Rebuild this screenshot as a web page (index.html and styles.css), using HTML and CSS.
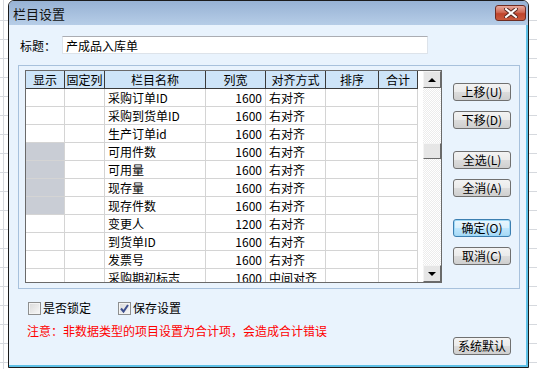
FILE: index.html
```html
<!doctype html>
<html lang="zh">
<head>
  <meta charset="utf-8">
  <title>栏目设置</title>
  <link rel="stylesheet" href="styles.css">
</head>
<body>
  <div class="window">
    <!-- title bar -->
    <div class="titlebar">
      <span class="title">栏目设置</span>
      <span class="close">
        <svg width="14" height="10" viewBox="0 0 14 10">
          <path d="M2 1 L12 9 M12 1 L2 9" stroke="#5a2a22" stroke-width="4" stroke-linecap="square"/>
          <path d="M2 1 L12 9 M12 1 L2 9" stroke="#fff" stroke-width="2" stroke-linecap="square"/>
        </svg>
      </span>
    </div>

    <div class="content">
      <div class="field">
        <span class="field-label">标题：</span>
        <input class="field-input" type="text" value="产成品入库单">
      </div>

      <div class="group">
        <div class="grid">
          <div class="grid-body">
            <div class="row head">
              <div class="cell">显示</div>
              <div class="cell">固定列</div>
              <div class="cell">栏目名称</div>
              <div class="cell">列宽</div>
              <div class="cell">对齐方式</div>
              <div class="cell">排序</div>
              <div class="cell">合计</div>
            </div>
            <div class="row">
              <div class="cell"></div><div class="cell"></div>
              <div class="cell name">采购订单ID</div><div class="cell num">1600</div>
              <div class="cell">右对齐</div><div class="cell"></div><div class="cell"></div>
            </div>
            <div class="row">
              <div class="cell"></div><div class="cell"></div>
              <div class="cell name">采购到货单ID</div><div class="cell num">1600</div>
              <div class="cell">右对齐</div><div class="cell"></div><div class="cell"></div>
            </div>
            <div class="row">
              <div class="cell"></div><div class="cell"></div>
              <div class="cell name">生产订单id</div><div class="cell num">1600</div>
              <div class="cell">右对齐</div><div class="cell"></div><div class="cell"></div>
            </div>
            <div class="row">
              <div class="cell off"></div><div class="cell"></div>
              <div class="cell name">可用件数</div><div class="cell num">1600</div>
              <div class="cell">右对齐</div><div class="cell"></div><div class="cell"></div>
            </div>
            <div class="row">
              <div class="cell off"></div><div class="cell"></div>
              <div class="cell name">可用量</div><div class="cell num">1600</div>
              <div class="cell">右对齐</div><div class="cell"></div><div class="cell"></div>
            </div>
            <div class="row">
              <div class="cell off"></div><div class="cell"></div>
              <div class="cell name">现存量</div><div class="cell num">1600</div>
              <div class="cell">右对齐</div><div class="cell"></div><div class="cell"></div>
            </div>
            <div class="row">
              <div class="cell off"></div><div class="cell"></div>
              <div class="cell name">现存件数</div><div class="cell num">1600</div>
              <div class="cell">右对齐</div><div class="cell"></div><div class="cell"></div>
            </div>
            <div class="row">
              <div class="cell"></div><div class="cell"></div>
              <div class="cell name">变更人</div><div class="cell num">1200</div>
              <div class="cell">右对齐</div><div class="cell"></div><div class="cell"></div>
            </div>
            <div class="row">
              <div class="cell"></div><div class="cell"></div>
              <div class="cell name">到货单ID</div><div class="cell num">1600</div>
              <div class="cell">右对齐</div><div class="cell"></div><div class="cell"></div>
            </div>
            <div class="row">
              <div class="cell"></div><div class="cell"></div>
              <div class="cell name">发票号</div><div class="cell num">1600</div>
              <div class="cell">右对齐</div><div class="cell"></div><div class="cell"></div>
            </div>
            <div class="row">
              <div class="cell"></div><div class="cell"></div>
              <div class="cell name">采购期初标志</div><div class="cell num">1600</div>
              <div class="cell">中间对齐</div><div class="cell"></div><div class="cell"></div>
            </div>
          </div>

          <!-- vertical scrollbar -->
          <div class="scrollbar">
            <div class="sb-btn"><span class="arrow-up"></span></div>
            <div class="sb-thumb"></div>
            <div class="sb-btn sb-down"><span class="arrow-down"></span></div>
          </div>
        </div>

        <div class="buttons">
          <button class="btn">上移(U)</button>
          <button class="btn">下移(D)</button>
          <button class="btn gap">全选(L)</button>
          <button class="btn">全消(A)</button>
          <button class="btn gap default">确定(O)</button>
          <button class="btn">取消(C)</button>
        </div>
      </div>

      <div class="options">
        <span class="check"><span class="box"></span>是否锁定</span>
        <span class="check"><span class="box checked">
          <svg width="11" height="11" viewBox="0 0 11 11"><path d="M2 5.5 L4.5 8.5 L9 2" fill="none" stroke="#3d4f8e" stroke-width="2"/></svg>
        </span>保存设置</span>
      </div>

      <div class="note">注意：非数据类型的项目设置为合计项，会造成合计错误</div>

      <div class="footer">
        <button class="btn">系统默认</button>
      </div>
    </div>
  </div>
</body>
</html>
```

FILE: styles.css
```css
body {
  margin: 0;
  padding: 0;
  width: 537px;
  height: 369px;
  overflow: hidden;
  font: 12px "Noto Sans CJK SC", sans-serif;
  color: #000;
  background-color: #fff;
  background-image:
    repeating-linear-gradient(to bottom, transparent 0 18px, #d6d9de 18px 19px),
    linear-gradient(to right, #d6d9de 0 1px, transparent 1px);
  background-position: 0 2px, 3px 0;
}

.window {
  margin-left: 8px;
  width: 521px;
  height: 368px;
  box-sizing: border-box;
  border: 1px solid #1b1b1b;
  border-radius: 6px 6px 0 0;
  background: #e9f3fd;
  box-shadow: inset -2px -2px 0 #5ec0e6;
  display: flex;
  flex-direction: column;
}

/* title bar */
.titlebar {
  height: 24px;
  display: flex;
  align-items: center;
  padding-left: 4px;
  border-radius: 5px 5px 0 0;
  background: linear-gradient(#97b2d4, #b6cde7);
}
.title {
  font-size: 13px;
  color: #111;
}
.close {
  margin-left: auto;
  margin-right: 2px;
  width: 31px;
  height: 16px;
  box-sizing: border-box;
  border: 1px solid #6e2c22;
  border-radius: 3px;
  background: linear-gradient(#e6a99d, #d06a55 45%, #c0442b 55%, #c85a3e);
  display: flex;
  align-items: center;
  justify-content: center;
}

.content {
  padding: 11px 8px 0 9px;
  display: flex;
  flex-direction: column;
}

/* title field */
.field {
  display: flex;
  align-items: center;
  height: 18px;
}
.field-label {
  padding-left: 2px;
  width: 42px;
}
.field-input {
  width: 366px;
  height: 18px;
  box-sizing: border-box;
  margin: 0;
  padding: 0 3px;
  border: 1px solid #dde3ea;
  border-top-color: #abadb3;
  background: #fff;
  font: 12px "Noto Sans CJK SC", sans-serif;
  outline: none;
}

/* group box with grid + buttons */
.group {
  margin-top: 11px;
  height: 224px;
  box-sizing: border-box;
  border: 1px solid #a8c1dc;
  padding: 4px 0 0 6px;
  display: flex;
  align-items: flex-start;
}
.grid {
  width: 417px;
  height: 213px;
  box-sizing: border-box;
  border: 1px solid #6a6a6a;
  background: #fff;
  display: flex;
}
.grid-body {
  width: 397px;
  overflow: hidden;
}
.row {
  display: grid;
  grid-template-columns: 39px 40px 101px 60px 60px 53px 39px;
  height: 18px;
}
.cell {
  box-sizing: border-box;
  border-right: 1px solid #d4d4d4;
  border-bottom: 1px solid #d4d4d4;
  line-height: 17px;
  white-space: nowrap;
  overflow: hidden;
  padding-left: 3px;
}
.cell.name {
  padding-left: 3px;
}
.cell.num {
  text-align: right;
  padding-right: 3px;
}
.cell.off {
  background: #c9cdd5;
}
.head .cell {
  background: #cde4f8;
  border-right: 1px solid #3a3a3a;
  border-bottom: 1px solid #3a3a3a;
  text-align: center;
  padding-left: 0;
}

/* scrollbar */
.scrollbar {
  width: 18px;
  display: flex;
  flex-direction: column;
  background: repeating-conic-gradient(#ececec 0 25%, #fff 0 50%) 0 0 / 2px 2px;
}
.sb-btn, .sb-thumb {
  box-sizing: border-box;
  border: 1px solid;
  border-color: #f4f4f4 #6a6a6a #6a6a6a #f4f4f4;
  background: #e6e6e6;
}
.sb-btn {
  height: 17px;
  display: flex;
  align-items: center;
  justify-content: center;
}
.sb-thumb {
  margin-top: 55px;
  height: 16px;
}
.sb-down {
  margin-top: auto;
}
.arrow-up, .arrow-down {
  width: 0;
  height: 0;
  border-left: 4px solid transparent;
  border-right: 4px solid transparent;
}
.arrow-up {
  border-bottom: 4px solid #000;
}
.arrow-down {
  border-top: 4px solid #000;
}

/* buttons */
.buttons {
  margin-left: 11px;
  padding-top: 13px;
  display: flex;
  flex-direction: column;
  gap: 10px;
}
.btn {
  width: 58px;
  height: 18px;
  margin: 0;
  padding: 0;
  box-sizing: border-box;
  border: 1px solid #707070;
  border-radius: 3px;
  background: linear-gradient(#f3f3f3, #ebebeb 48%, #dcdcdc 52%, #cfcfcf);
  font: 12px "Noto Sans CJK SC", sans-serif;
  line-height: 16px;
  color: #000;
}
.btn.gap {
  margin-top: 12px;
}
.btn.default {
  border-color: #3c7fb1;
  background: linear-gradient(#eaf6fd, #d9f0fc 48%, #bee6fd 52%, #a7d9f5);
  box-shadow: inset 0 0 0 1px #9ed8f6;
}

/* options */
.options {
  margin-top: 12px;
  padding-left: 10px;
  display: flex;
  height: 14px;
  align-items: center;
}
.check {
  display: flex;
  align-items: center;
  gap: 2px;
  margin-right: 27px;
  line-height: 14px;
}
.box {
  width: 13px;
  height: 13px;
  box-sizing: border-box;
  border: 1px solid #8e8f8f;
  background: linear-gradient(135deg, #d9d9d9, #f8f8f8);
  box-shadow: inset 0 0 0 1px #f4f4f4;
  display: flex;
  align-items: center;
  justify-content: center;
}

.note {
  margin-top: 9px;
  padding-left: 9px;
  height: 13px;
  line-height: 13px;
  color: #ff0000;
}

.footer {
  display: flex;
  justify-content: flex-end;
  padding-right: 9px;
}
```
